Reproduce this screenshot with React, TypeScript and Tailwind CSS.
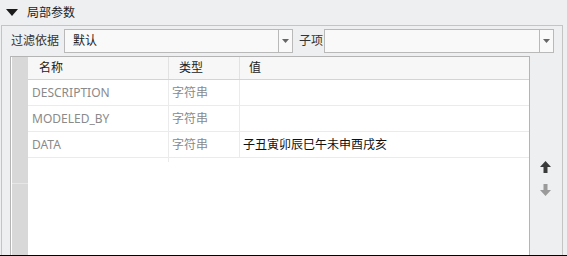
import { useState } from "react";

const rows = [
  { name: "DESCRIPTION", type: "字符串", value: "" },
  { name: "MODELED_BY", type: "字符串", value: "" },
  { name: "DATA", type: "字符串", value: "子丑寅卯辰巳午未申酉戌亥" },
];

const font = { fontFamily: '"Noto Sans", "Noto Sans CJK SC", sans-serif' };

function Combo({ value, width }: { value?: string; width: string }) {
  return (
    <div
      className={`${width} h-[24px] shrink-0 flex border border-[#b9b9b9] bg-[#f9f9f9]`}
    >
      <div className="flex-1 flex items-center pl-[8px] text-[12px] text-[#222]">
        {value}
      </div>
      <div className="w-[14px] border-l border-[#b9b9b9] flex items-center justify-center">
        <svg width="7" height="4" viewBox="0 0 7 4">
          <path d="M0 0 H7 L3.5 4 Z" fill="#666" />
        </svg>
      </div>
    </div>
  );
}

export default function App() {
  const [open, setOpen] = useState(true);

  return (
    <div
      className="w-[567px] h-[256px] bg-[#eeeff1] border-b border-black flex flex-col overflow-hidden"
      style={font}
    >
      <div
        className="h-[25px] flex items-center pl-[6px] gap-[9px] shrink-0"
        onClick={() => setOpen(!open)}
      >
        <svg width="12" height="7" viewBox="0 0 12 7">
          <path d="M0 0 H12 L6 7 Z" fill="#1a1a1a" />
        </svg>
        <span className="text-[12px] text-[#222] leading-none">局部参数</span>
      </div>

      {open && (
        <div className="ml-[1px] w-[562px] flex-1 border-l border-t border-r border-[#c4c4c4] flex flex-col min-h-0">
          <div className="flex items-center h-[24px] mt-[3px] pl-[9px] whitespace-nowrap">
            <span className="text-[12px] text-[#333] w-[53px] shrink-0">过滤依据</span>
            <Combo value="默认" width="w-[229px]" />
            <span className="text-[12px] text-[#333] ml-[6px] w-[25px] shrink-0">子项</span>
            <Combo width="w-[230px]" />
          </div>

          <div className="flex flex-1 mt-[3px] pl-[8px] min-h-0">
            <div className="w-[520px] border-l border-t border-r border-[#b4b4b4] bg-white flex">
              <div className="w-[16px] ml-[1px] bg-[#d8d8d8] flex flex-col">
                <div className="h-[23px]" />
                <div className="h-[26px]" />
                <div className="h-[26px]" />
                <div className="h-[26px]" />
                <div className="h-[26px] border-b border-[#e6e6e6]" />
              </div>
              <div className="flex-1 flex flex-col text-[12px]">
                <div className="h-[23px] flex bg-[#f7f7f7] border-b border-[#d4d4d4] text-[#222]">
                  <div className="w-[140px] pl-[11px] flex items-center">名称</div>
                  <div className="w-[71px] border-l border-[#e2e2e2] pl-[10px] flex items-center">
                    类型
                  </div>
                  <div className="flex-1 border-l border-[#e2e2e2] pl-[9px] flex items-center">
                    值
                  </div>
                </div>
                {rows.map((r) => (
                  <div
                    key={r.name}
                    className="h-[26px] flex border-b border-[#ebebeb]"
                  >
                    <div className="w-[140px] pl-[4px] flex items-center text-[#8a8a8a]">
                      {r.name}
                    </div>
                    <div className="w-[71px] border-l border-[#ebebeb] pl-[3px] flex items-center text-[#8a8a8a]">
                      {r.type}
                    </div>
                    <div className="flex-1 border-l border-[#ebebeb] pl-[3px] flex items-center text-[#111]">
                      {r.value}
                    </div>
                  </div>
                ))}
                <div className="h-[4px] flex">
                  <div className="w-[140px]" />
                  <div className="border-l border-[#ebebeb]" />
                </div>
              </div>
            </div>
            <div className="flex-1 flex flex-col items-center pt-[105px] gap-[11px] pr-[1px]">
              <svg width="11" height="12" viewBox="0 0 11 12">
                <path d="M5.5 0 L11 6 H7.5 V12 H3.5 V6 H0 Z" fill="#3a3a3a" />
              </svg>
              <svg width="11" height="12" viewBox="0 0 11 12">
                <path d="M5.5 12 L11 6 H7.5 V0 H3.5 V6 H0 Z" fill="#9a9a9a" />
              </svg>
            </div>
          </div>
        </div>
      )}
    </div>
  );
}
